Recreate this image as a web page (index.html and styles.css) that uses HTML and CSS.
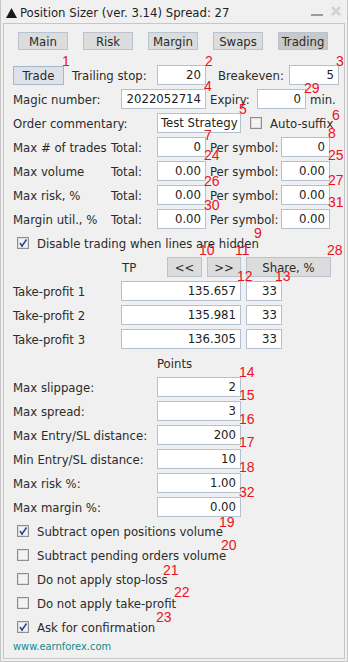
FILE: index.html
```html
<!DOCTYPE html>
<html>
<head>
<meta charset="utf-8">
<title>Position Sizer</title>
<link rel="stylesheet" href="styles.css">
</head>
<body>
<div class="window">
  <div class="titlebar">
    <svg class="tri" width="11" height="10" viewBox="0 0 11 10"><polygon points="5.5,0 11,10 0,10" fill="#1a1a1a"/></svg>
    <span class="title">Position Sizer (ver. 3.14) Spread: 27</span>
    <svg class="minimize" width="12" height="4" viewBox="0 0 12 4"><rect x="0" y="1" width="12" height="2" fill="#9a9a9a"/></svg>
    <svg class="close" width="10" height="10" viewBox="0 0 10 10"><path d="M1 1 L9 9 M9 1 L1 9" stroke="#c4c4c4" stroke-width="2.4"/><path d="M1 1 L9 9 M9 1 L1 9" stroke="#e6e6e6" stroke-width="0.8"/></svg>
  </div>
  <div class="panel">
    <div class="tabs">
      <span class="tab">Main</span>
      <span class="tab">Risk</span>
      <span class="tab">Margin</span>
      <span class="tab">Swaps</span>
      <span class="tab active">Trading</span>
    </div>

    <div class="row">
      <span class="btn trade">Trade</span>
      <span class="lbl l-ts">Trailing stop:</span>
      <span class="inp w49">20</span>
      <span class="lbl l-be">Breakeven:</span>
      <span class="inp w50">5</span>
    </div>
    <div class="row">
      <span class="lbl w108">Magic number:</span>
      <span class="inp w85">2022052714</span>
      <span class="lbl w51 pl4">Expiry:</span>
      <span class="inp w49">0</span>
      <span class="lbl pl4">min.</span>
    </div>
    <div class="row">
      <span class="lbl w144">Order commentary:</span>
      <span class="inp w84 left">Test Strategy</span>
      <span class="cb ml9"><svg width="12" height="12" viewBox="0 0 12 12"><rect x="0.5" y="0.5" width="11" height="11" fill="#f4f4f4" stroke="#8e8e8e"/><rect x="1.5" y="1.5" width="9" height="9" fill="none" stroke="#dedede"/></svg></span>
      <span class="lbl ml8">Auto-suffix</span>
    </div>
    <div class="row">
      <span class="lbl w98">Max # of trades</span>
      <span class="lbl w46">Total:</span>
      <span class="inp w49">0</span>
      <span class="lbl w75 pl4">Per symbol:</span>
      <span class="inp w49">0</span>
    </div>
    <div class="row">
      <span class="lbl w98">Max volume</span>
      <span class="lbl w46">Total:</span>
      <span class="inp w49">0.00</span>
      <span class="lbl w75 pl4">Per symbol:</span>
      <span class="inp w49">0.00</span>
    </div>
    <div class="row">
      <span class="lbl w98">Max risk, %</span>
      <span class="lbl w46">Total:</span>
      <span class="inp w49">0.00</span>
      <span class="lbl w75 pl4">Per symbol:</span>
      <span class="inp w49">0.00</span>
    </div>
    <div class="row">
      <span class="lbl w98">Margin util., %</span>
      <span class="lbl w46">Total:</span>
      <span class="inp w49">0.00</span>
      <span class="lbl w75 pl4">Per symbol:</span>
      <span class="inp w49">0.00</span>
    </div>
    <div class="row">
      <span class="cb ml4"><svg width="12" height="12" viewBox="0 0 12 12"><rect x="0.5" y="0.5" width="11" height="11" fill="#f4f4f4" stroke="#8e8e8e"/><rect x="1.5" y="1.5" width="9" height="9" fill="none" stroke="#dedede"/><path d="M3 6 L5 9 L9.5 2.5" fill="none" stroke="#34449a" stroke-width="1.6"/></svg></span>
      <span class="lbl ml8">Disable trading when lines are hidden</span>
    </div>
    <div class="row">
      <span class="lbl tp">TP</span>
      <span class="btn w35">&lt;&lt;</span>
      <span class="btn w34 ml5">&gt;&gt;</span>
      <span class="btn w85 ml5">Share, %</span>
    </div>
    <div class="row">
      <span class="lbl w108">Take-profit 1</span>
      <span class="inp w120">135.657</span>
      <span class="inp w36 ml5">33</span>
    </div>
    <div class="row">
      <span class="lbl w108">Take-profit 2</span>
      <span class="inp w120">135.981</span>
      <span class="inp w36 ml5">33</span>
    </div>
    <div class="row">
      <span class="lbl w108">Take-profit 3</span>
      <span class="inp w120">136.305</span>
      <span class="inp w36 ml5">33</span>
    </div>
    <div class="row">
      <span class="lbl points">Points</span>
    </div>
    <div class="row">
      <span class="lbl w144">Max slippage:</span>
      <span class="inp w84">2</span>
    </div>
    <div class="row">
      <span class="lbl w144">Max spread:</span>
      <span class="inp w84">3</span>
    </div>
    <div class="row">
      <span class="lbl w144">Max Entry/SL distance:</span>
      <span class="inp w84">200</span>
    </div>
    <div class="row">
      <span class="lbl w144">Min Entry/SL distance:</span>
      <span class="inp w84">10</span>
    </div>
    <div class="row">
      <span class="lbl w144">Max risk %:</span>
      <span class="inp w84">1.00</span>
    </div>
    <div class="row">
      <span class="lbl w144">Max margin %:</span>
      <span class="inp w84">0.00</span>
    </div>
    <div class="row">
      <span class="cb ml4"><svg width="12" height="12" viewBox="0 0 12 12"><rect x="0.5" y="0.5" width="11" height="11" fill="#f4f4f4" stroke="#8e8e8e"/><rect x="1.5" y="1.5" width="9" height="9" fill="none" stroke="#dedede"/><path d="M3 6 L5 9 L9.5 2.5" fill="none" stroke="#34449a" stroke-width="1.6"/></svg></span>
      <span class="lbl ml8">Subtract open positions volume</span>
    </div>
    <div class="row">
      <span class="cb ml4"><svg width="12" height="12" viewBox="0 0 12 12"><rect x="0.5" y="0.5" width="11" height="11" fill="#f4f4f4" stroke="#8e8e8e"/><rect x="1.5" y="1.5" width="9" height="9" fill="none" stroke="#dedede"/></svg></span>
      <span class="lbl ml8">Subtract pending orders volume</span>
    </div>
    <div class="row">
      <span class="cb ml4"><svg width="12" height="12" viewBox="0 0 12 12"><rect x="0.5" y="0.5" width="11" height="11" fill="#f4f4f4" stroke="#8e8e8e"/><rect x="1.5" y="1.5" width="9" height="9" fill="none" stroke="#dedede"/></svg></span>
      <span class="lbl ml8">Do not apply stop-loss</span>
    </div>
    <div class="row">
      <span class="cb ml4"><svg width="12" height="12" viewBox="0 0 12 12"><rect x="0.5" y="0.5" width="11" height="11" fill="#f4f4f4" stroke="#8e8e8e"/><rect x="1.5" y="1.5" width="9" height="9" fill="none" stroke="#dedede"/></svg></span>
      <span class="lbl ml8">Do not apply take-profit</span>
    </div>
    <div class="row">
      <span class="cb ml4"><svg width="12" height="12" viewBox="0 0 12 12"><rect x="0.5" y="0.5" width="11" height="11" fill="#f4f4f4" stroke="#8e8e8e"/><rect x="1.5" y="1.5" width="9" height="9" fill="none" stroke="#dedede"/><path d="M3 6 L5 9 L9.5 2.5" fill="none" stroke="#34449a" stroke-width="1.6"/></svg></span>
      <span class="lbl ml8">Ask for confirmation</span>
    </div>
    <div class="site">www.earnforex.com</div>
  </div>

  <span class="badge b1">1</span>
  <span class="badge b2">2</span>
  <span class="badge b3">3</span>
  <span class="badge b4">4</span>
  <span class="badge b29">29</span>
  <span class="badge b5">5</span>
  <span class="badge b6">6</span>
  <span class="badge b7">7</span>
  <span class="badge b8">8</span>
  <span class="badge b24">24</span>
  <span class="badge b25">25</span>
  <span class="badge b26">26</span>
  <span class="badge b27">27</span>
  <span class="badge b30">30</span>
  <span class="badge b31">31</span>
  <span class="badge b9">9</span>
  <span class="badge b10">10</span>
  <span class="badge b11">11</span>
  <span class="badge b28">28</span>
  <span class="badge b12">12</span>
  <span class="badge b13">13</span>
  <span class="badge b14">14</span>
  <span class="badge b15">15</span>
  <span class="badge b16">16</span>
  <span class="badge b17">17</span>
  <span class="badge b18">18</span>
  <span class="badge b32">32</span>
  <span class="badge b19">19</span>
  <span class="badge b20">20</span>
  <span class="badge b21">21</span>
  <span class="badge b22">22</span>
  <span class="badge b23">23</span>
</div>
</body>
</html>
```
FILE: styles.css
```css
* { box-sizing: border-box; }
html, body { margin: 0; padding: 0; }
body {
  width: 348px;
  height: 662px;
  overflow: hidden;
  background: #f0f0f0;
  font-family: "DejaVu Sans Condensed", "DejaVu Sans", sans-serif;
  font-size: 13px;
  color: #2b2b2b;
}
.window {
  position: relative;
  width: 348px;
  height: 662px;
  border: 1px solid #c6c6c6;
  border-top: none;
  background: #f0f0f0;
}
.titlebar {
  height: 23px;
  display: flex;
  align-items: center;
  padding-top: 2px;
}
.tri { margin-left: 5px; flex: none; }
.title { margin-left: 3px; font-size: 13px; color: #1e1e1e; white-space: nowrap; }
.minimize { margin-left: auto; flex: none; margin-top: 4px; }
.close { margin-left: 8px; margin-right: 6px; flex: none; margin-top: -3px; }

.panel {
  margin: 0 2px;
  height: 636px;
  border: 1px solid #c6c6c6;
  background: #f0f0f0;
}
.tabs {
  display: flex;
  gap: 15px;
  padding-left: 14px;
  margin-top: 8px;
  margin-bottom: 13px;
}
.tab, .btn {
  flex: none;
  height: 18px;
  width: 50px;
  background: #dcdcdc;
  border: 1px solid #b9c3cf;
  display: flex;
  align-items: center;
  justify-content: center;
  color: #2b2b2b;
  white-space: nowrap;
}
.tab.active { background: #c8c8c8; }
.btn { height: 20px; }
.btn.trade { width: 51px; height: 19px; background: #dde2ea; border-color: #a9b6c6; margin-top: 1px; }

.row {
  display: flex;
  align-items: center;
  height: 24px;
  padding-left: 9px;
  white-space: nowrap;
}
.lbl { flex: none; }
.inp {
  flex: none;
  height: 20px;
  border: 1px solid #b4c0d0;
  background: #fff;
  text-align: right;
  padding: 0 4px;
  line-height: 18px;
  overflow: hidden;
  color: #222;
}
.inp.left { text-align: left; padding: 0 0 0 3px; }
.cb { flex: none; width: 12px; height: 12px; display: block; }
.cb svg { display: block; }

.w34 { width: 34px; }
.w35 { width: 35px; }
.w36 { width: 36px; }
.w46 { width: 46px; }
.w49 { width: 49px; }
.w50 { width: 50px; }
.w51 { width: 51px; }
.w75 { width: 75px; }
.w84 { width: 84px; }
.w85 { width: 85px; }
.w98 { width: 98px; }
.w108 { width: 108px; }
.w120 { width: 120px; }
.w144 { width: 144px; }
.pl4 { padding-left: 4px; }
.ml4 { margin-left: 4px; }
.ml5 { margin-left: 5px; }
.ml8 { margin-left: 8px; }
.ml9 { margin-left: 9px; }
.l-ts { width: 93px; padding-left: 8px; }
.l-be { width: 83px; padding-left: 12px; }
.tp { width: 154px; padding-left: 109px; }
.points { padding-left: 144px; }

.site {
  padding-left: 9px;
  height: 16px;
  line-height: 16px;
  font-size: 11px;
  color: #148a8a;
}

.badge {
  position: absolute;
  font-family: "Liberation Sans", Arial, sans-serif;
  font-size: 14px;
  line-height: 14px;
  color: #ee1122;
}
.b1 { left: 61px; top: 54px; }
.b2 { left: 204px; top: 54px; }
.b3 { left: 335px; top: 54px; }
.b4 { left: 203px; top: 79px; }
.b29 { left: 303px; top: 81px; }
.b5 { left: 238px; top: 102px; }
.b6 { left: 331px; top: 108px; }
.b7 { left: 203px; top: 128px; }
.b8 { left: 327px; top: 126px; }
.b24 { left: 203px; top: 148px; }
.b25 { left: 327px; top: 148px; }
.b26 { left: 203px; top: 174px; }
.b27 { left: 327px; top: 173px; }
.b30 { left: 203px; top: 198px; }
.b31 { left: 327px; top: 195px; }
.b9 { left: 253px; top: 226px; }
.b10 { left: 198px; top: 243px; }
.b11 { left: 234px; top: 243px; }
.b28 { left: 326px; top: 243px; }
.b12 { left: 236px; top: 269px; }
.b13 { left: 274px; top: 269px; }
.b14 { left: 238px; top: 365px; }
.b15 { left: 238px; top: 388px; }
.b16 { left: 238px; top: 412px; }
.b17 { left: 238px; top: 435px; }
.b18 { left: 238px; top: 460px; }
.b32 { left: 238px; top: 485px; }
.b19 { left: 218px; top: 515px; }
.b20 { left: 220px; top: 538px; }
.b21 { left: 162px; top: 563px; }
.b22 { left: 173px; top: 585px; }
.b23 { left: 155px; top: 610px; }
```
